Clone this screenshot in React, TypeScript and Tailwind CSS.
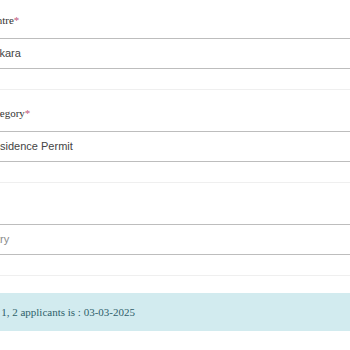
import React from "react";

interface FieldProps {
  label: string;
  value: string;
  muted?: boolean;
}

const Field: React.FC<FieldProps> = ({ label, value, muted }) => {
  return (
    <div className="border-b border-[#efefef] pb-[20px]">
      <div className="h-[41px] pt-[17px]">
        {label && (
          <label className="block -ml-[1.5px] text-[11px] leading-[13px] text-[#333] font-['Liberation_Serif',serif] whitespace-nowrap">
            {label}
            <span className="text-[#c2587a]">*</span>
          </label>
        )}
      </div>
      <div className="h-[31px] border-y border-[#bdbdbd] flex items-center">
        <span
          className={`text-[11px] leading-none whitespace-nowrap font-['Liberation_Sans',Arial,sans-serif] ${
            muted ? "text-[#8a8a8a] -ml-[2.5px]" : "text-[#444]"
          }`}
        >
          {value}
        </span>
      </div>
    </div>
  );
};

export default function App() {
  return (
    <div className="w-[350px] h-[350px] overflow-hidden bg-white">
      <div className="-ml-[14px] -mt-[4px] w-[364px]">
        <div className="border-b border-[#efefef] h-0" />
        <Field label="Centre" value="Ankara" />
        <Field label="Category" value="Residence Permit" />
        <Field label="" value="Entry" muted />
      </div>
      <div className="mt-[17px] h-[38px] bg-[#d2ebef] flex items-center">
        <div className="w-[135px] flex justify-end">
          <span className="whitespace-nowrap text-[11px] text-[#2f5f6b] font-['Liberation_Serif',serif]">
            The earliest available date for 1, 2 applicants is : 03-03-2025
          </span>
        </div>
      </div>
    </div>
  );
}
